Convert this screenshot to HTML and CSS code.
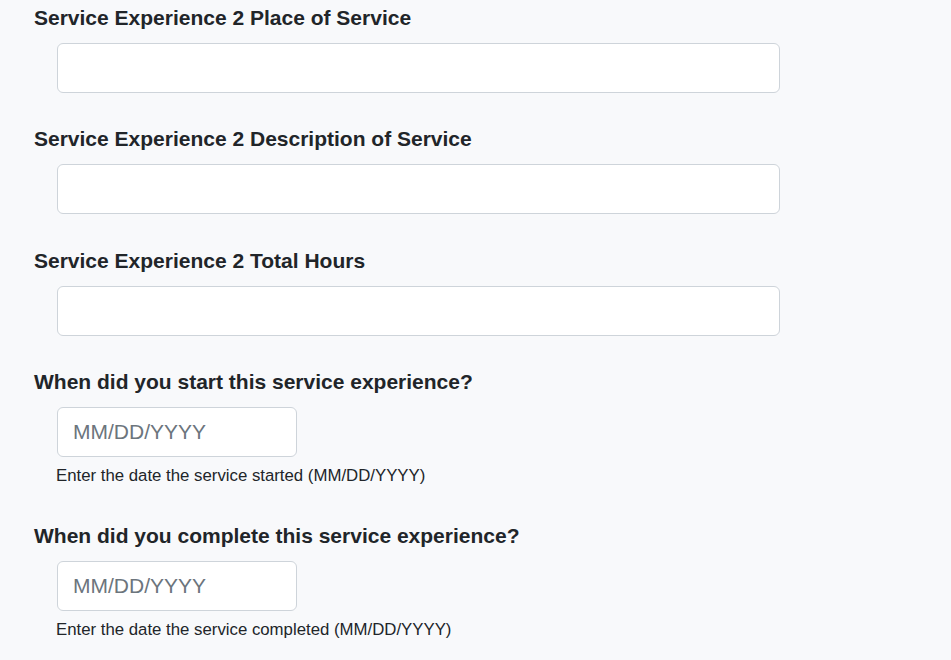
FILE: index.html
```html
<!DOCTYPE html>
<html>
<head>
<meta charset="utf-8">
<link rel="stylesheet" href="styles.css">
</head>
<body>
<form class="form">
  <div class="field">
    <label class="label">Service Experience 2 Place of Service</label>
    <input class="input input-wide" type="text">
  </div>
  <div class="field">
    <label class="label">Service Experience 2 Description of Service</label>
    <input class="input input-wide" type="text">
  </div>
  <div class="field">
    <label class="label">Service Experience 2 Total Hours</label>
    <input class="input input-wide" type="text">
  </div>
  <div class="field field-date">
    <label class="label">When did you start this service experience?</label>
    <input class="input input-date" type="text" placeholder="MM/DD/YYYY">
    <div class="help">Enter the date the service started (MM/DD/YYYY)</div>
  </div>
  <div class="field field-date">
    <label class="label">When did you complete this service experience?</label>
    <input class="input input-date" type="text" placeholder="MM/DD/YYYY">
    <div class="help">Enter the date the service completed (MM/DD/YYYY)</div>
  </div>
</form>
</body>
</html>
```
FILE: styles.css
```css
html, body {
  margin: 0;
  padding: 0;
  background: #f8f9fb;
}
body {
  font-family: "Liberation Sans", Arial, sans-serif;
  color: #212529;
}
.form {
  padding: 6px 0 0 34px;
  display: flex;
  flex-direction: column;
}
.field {
  display: flex;
  flex-direction: column;
  align-items: flex-start;
  padding-bottom: 34.33px;
}
.field-date {
  padding-bottom: 36px;
}
.label {
  font-size: 21px;
  font-weight: bold;
  line-height: 24px;
  color: #212529;
}
.input {
  box-sizing: border-box;
  height: 50px;
  margin: 13px 0 0 23px;
  border: 1px solid #ced4da;
  border-radius: 6px;
  background: #fff;
  padding: 0 15px;
  font-family: "Liberation Sans", Arial, sans-serif;
  font-size: 21px;
  color: #212529;
  outline: none;
}
.input::placeholder {
  color: #6c757d;
}
.input-wide {
  width: 723px;
}
.input-date {
  width: 240px;
}
.help {
  margin: 7px 0 0 22px;
  font-size: 16.8px;
  line-height: 24px;
  color: #212529;
}
```
